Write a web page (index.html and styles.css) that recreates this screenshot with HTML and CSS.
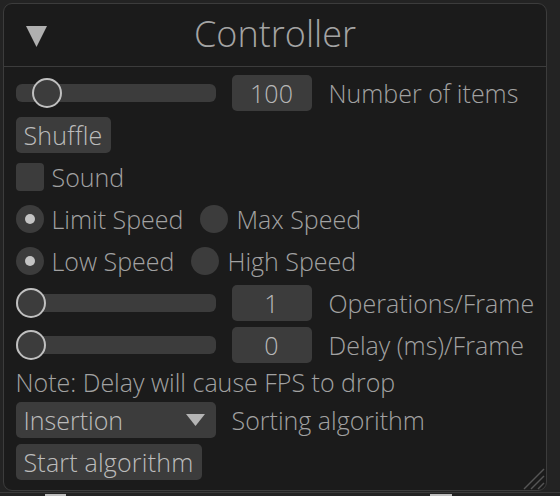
FILE: index.html
```html
<!DOCTYPE html>
<html>
<head>
<meta charset="utf-8">
<link rel="stylesheet" href="styles.css">
</head>
<body>
<div class="window">
  <div class="titlebar">
    <svg class="collapse" width="21" height="21" viewBox="0 0 21 21"><polygon points="0,0 21,0 10.5,21" fill="#b0b0b0"/></svg>
    <span class="title">Controller</span>
  </div>
  <div class="content">
    <div class="row">
      <div class="slider"><div class="track"></div><div class="knob" style="left:16px"></div></div>
      <div class="valbox">100</div>
      <span class="label lab-gap">Number of items</span>
    </div>
    <div class="row">
      <button class="btn">Shuffle</button>
    </div>
    <div class="row">
      <div class="check"></div>
      <span class="label">Sound</span>
    </div>
    <div class="row">
      <div class="radio on"></div>
      <span class="label">Limit Speed</span>
      <div class="radio next"></div>
      <span class="label">Max Speed</span>
    </div>
    <div class="row">
      <div class="radio on"></div>
      <span class="label">Low Speed</span>
      <div class="radio next"></div>
      <span class="label">High Speed</span>
    </div>
    <div class="row">
      <div class="slider"><div class="track"></div><div class="knob" style="left:0px"></div></div>
      <div class="valbox">1</div>
      <span class="label lab-gap">Operations/Frame</span>
    </div>
    <div class="row">
      <div class="slider"><div class="track"></div><div class="knob" style="left:0px"></div></div>
      <div class="valbox">0</div>
      <span class="label lab-gap">Delay (ms)/Frame</span>
    </div>
    <div class="row note">
      <span class="label">Note: Delay will cause FPS to drop</span>
    </div>
    <div class="row">
      <div class="combo"><span>Insertion</span><svg width="19" height="12" viewBox="0 0 19 12"><polygon points="0,0 19,0 9.5,12" fill="#b4b4b4"/></svg></div>
      <span class="label">Sorting algorithm</span>
    </div>
    <div class="row">
      <button class="btn">Start algorithm</button>
    </div>
  </div>
  <svg class="resize" width="22" height="22" viewBox="0 0 22 22">
    <line x1="21" y1="1" x2="1" y2="21" stroke="#555" stroke-width="1.5"/>
    <line x1="21" y1="8" x2="8" y2="21" stroke="#555" stroke-width="1.5"/>
    <line x1="21" y1="15" x2="15" y2="21" stroke="#555" stroke-width="1.5"/>
  </svg>
</div>
<div class="dock">
  <div class="tab t1"></div>
  <div class="tab t2"></div>
</div>
</body>
</html>
```

FILE: styles.css
```css
html, body {
  margin: 0;
  padding: 0;
  background: #232323;
  width: 560px;
  height: 496px;
  overflow: hidden;
  font-family: "Open Sans", "Noto Sans", sans-serif;
  font-weight: 300;
}

.window {
  position: relative;
  box-sizing: border-box;
  margin: 3px 0 0 3px;
  width: 544px;
  height: 488px;
  background: #1b1b1b;
  border: 1.5px solid #3c3c3c;
  border-radius: 9px;
}

.titlebar {
  position: relative;
  height: 62px;
  border-bottom: 1.5px solid #3c3c3c;
  display: flex;
  align-items: center;
  justify-content: center;
}

.collapse {
  position: absolute;
  left: 22px;
  top: 22px;
}

.title {
  font-size: 36px;
  color: #a4a4a4;
  margin-top: -4px;
}

.content {
  padding: 8px 0 0 11.5px;
  display: flex;
  flex-direction: column;
  gap: 6px;
}

.row {
  display: flex;
  align-items: center;
  height: 36px;
}

.row.note {
  height: 28px;
  margin-top: -1px;
}

.label {
  font-size: 25px;
  color: #a2a2a2;
  white-space: nowrap;
  margin-top: -1px;
}

.lab-gap {
  margin-left: 17px;
}

.slider {
  position: relative;
  width: 200px;
  height: 36px;
  margin-right: 16px;
}

.track {
  position: absolute;
  left: 0;
  top: 9px;
  width: 200px;
  height: 18px;
  border-radius: 6px;
  background: #3c3c3c;
}

.knob {
  position: absolute;
  top: 3px;
  box-sizing: border-box;
  width: 30px;
  height: 30px;
  border-radius: 50%;
  background: #3c3c3c;
  border: 2px solid #c0c0c0;
}

.valbox {
  width: 80px;
  height: 36px;
  border-radius: 5px;
  background: #3c3c3c;
  color: #b8b8b8;
  font-size: 25px;
  display: flex;
  align-items: center;
  justify-content: center;
}

.btn {
  height: 36px;
  padding: 0 9px 0 8px;
  border: none;
  border-radius: 5px;
  background: #3c3c3c;
  color: #bcbcbc;
  font-family: "Open Sans", "Noto Sans", sans-serif;
  font-weight: 300;
  font-size: 25px;
  letter-spacing: 0.2px;
  display: flex;
  align-items: center;
}

.check {
  width: 28px;
  height: 28px;
  border-radius: 4px;
  background: #3c3c3c;
  margin-right: 8px;
}

.radio {
  position: relative;
  width: 28px;
  height: 28px;
  border-radius: 50%;
  background: #3c3c3c;
  margin-right: 8px;
  flex: none;
}

.radio.on::after {
  content: "";
  position: absolute;
  left: 9px;
  top: 9px;
  width: 10px;
  height: 10px;
  border-radius: 50%;
  background: #c4c4c4;
}

.radio.next {
  margin-left: 17px;
}

.combo {
  box-sizing: border-box;
  width: 200px;
  height: 36px;
  border-radius: 5px;
  background: #3c3c3c;
  color: #bcbcbc;
  font-size: 25px;
  padding: 0 11px 0 8px;
  display: flex;
  align-items: center;
  justify-content: space-between;
  margin-right: 16px;
}

.resize {
  position: absolute;
  right: 1px;
  bottom: 0px;
}

.dock {
  position: relative;
  margin-top: 1px;
  height: 4px;
  border-top: 1px solid #3a3a3a;
}

.tab {
  position: absolute;
  top: 1px;
  height: 3px;
  background: #bdbdbd;
}

.t1 { left: 45px; width: 21px; }
.t2 { left: 430px; width: 22px; }
```
